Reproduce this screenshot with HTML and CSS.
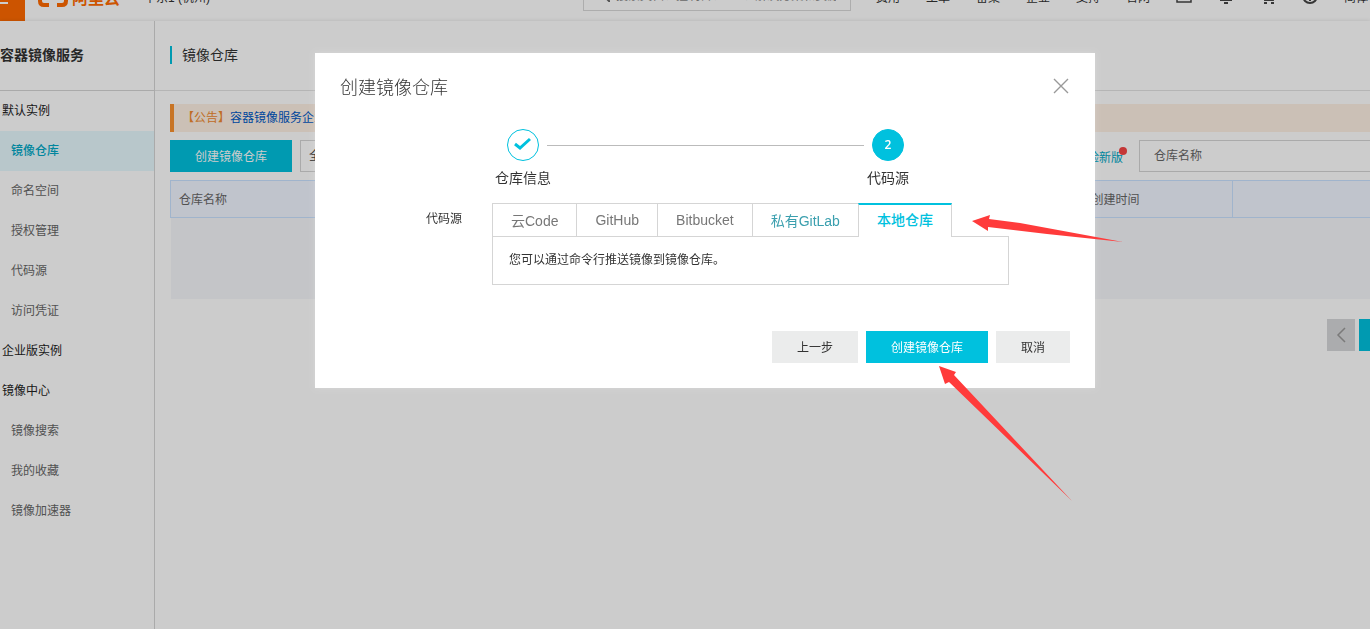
FILE: index.html
```html
<!DOCTYPE html>
<html lang="zh-CN">
<head>
  <meta charset="UTF-8">
  <meta name="viewport" content="width=device-width, initial-scale=1.0">
  <title>容器镜像服务</title>
  <link rel="stylesheet" href="styles.css">
</head>
<body>

  <header class="topbar">
    <div class="topbar-inner">
      <button class="menu-btn" type="button" aria-label="菜单">
        <svg width="24" height="18" viewBox="0 0 24 18"><path d="M0 2h8M0 9h8M0 16h8" stroke="#fff" stroke-width="2"/></svg>
      </button>
      <a class="logo" href="#">
        <svg width="30" height="20" viewBox="0 0 30 20" fill="none" stroke="#ff6a00" stroke-width="4">
          <path d="M11 2H6Q2 2 2 6v8q0 4 4 4h5M19 2h5q4 0 4 4v8q0 4-4 4h-5"/>
        </svg>
        <span>阿里云</span>
      </a>
      <span class="region">华东1 (杭州)</span>
      <div class="search">
        <svg width="12" height="12" viewBox="0 0 12 12" fill="none" stroke="#666" stroke-width="2"><circle cx="5" cy="5" r="4"/><path d="M8 8l4 4"/></svg>
        <input type="text" aria-label="搜索" placeholder="搜索文档、控制台、API、解决方案和资源">
      </div>
      <nav class="topnav">
        <a href="#">费用</a>
        <a href="#">工单</a>
        <a href="#">备案</a>
        <a href="#">企业</a>
        <a href="#">支持</a>
        <a href="#">官网</a>
        <svg width="16" height="14" viewBox="0 0 16 14" fill="none" stroke="#444" stroke-width="1.5"><path d="M1 1h14v12H1zM4 10h8"/></svg>
        <svg width="16" height="16" viewBox="0 0 16 16" fill="none" stroke="#444" stroke-width="2"><path d="M4 12V7a4 4 0 0 1 8 0v5M2 12h12M6 15h4"/></svg>
        <svg width="16" height="16" viewBox="0 0 16 16" fill="none" stroke="#444" stroke-width="2"><path d="M0 1h3l2 11h8l2-8H4M4 15h3M11 15h3"/></svg>
        <svg width="16" height="16" viewBox="0 0 16 16" fill="none" stroke="#444" stroke-width="2"><circle cx="8" cy="8" r="7"/><path d="M5 6a3 3 0 1 1 3 3v4"/></svg>
        <a href="#">简体</a>
      </nav>
    </div>
  </header>

  <div class="layout">
    <aside class="sidebar">
      <h2>容器镜像服务</h2>
      <nav class="menu">
        <a class="group" href="#">默认实例</a>
        <a class="active" href="#">镜像仓库</a>
        <a href="#">命名空间</a>
        <a href="#">授权管理</a>
        <a href="#">代码源</a>
        <a href="#">访问凭证</a>
        <a class="group" href="#">企业版实例</a>
        <a class="group" href="#">镜像中心</a>
        <a href="#">镜像搜索</a>
        <a href="#">我的收藏</a>
        <a href="#">镜像加速器</a>
      </nav>
    </aside>

    <main class="main">
      <div class="page-head">
        <h1>镜像仓库</h1>
      </div>
      <div class="content">
        <p class="notice">【公告】<a href="#">容器镜像服务企业版</a></p>
        <div class="toolbar">
          <button class="btn primary" type="button">创建镜像仓库</button>
          <select class="namespace" aria-label="命名空间">
            <option>全部命名空间</option>
          </select>
          <a class="new-version" href="#">体验新版</a>
          <input class="filter" type="text" aria-label="仓库名称" placeholder="仓库名称">
        </div>
        <table class="repo-table">
          <thead>
            <tr>
              <th>仓库名称</th>
              <th class="col-time">创建时间</th>
              <th class="col-action"></th>
            </tr>
          </thead>
          <tbody>
            <tr><td colspan="3"></td></tr>
          </tbody>
        </table>
        <div class="pager">
          <button class="prev" type="button" aria-label="上一页">
            <svg width="10" height="16" viewBox="0 0 10 16" fill="none" stroke="#999" stroke-width="1.5"><path d="M9 1L2 8l7 7"/></svg>
          </button>
          <button class="current" type="button" aria-label="当前页"></button>
        </div>
      </div>
    </main>
  </div>

  <div class="mask">
    <div class="modal" role="dialog" aria-labelledby="modalTitle">
      <div class="modal-head">
        <h3 id="modalTitle">创建镜像仓库</h3>
        <button class="close" type="button" aria-label="关闭">
          <svg width="16" height="16" viewBox="0 0 16 16" stroke="#999" stroke-width="1.4"><path d="M1 1l14 14M15 1L1 15"/></svg>
        </button>
      </div>

      <div class="steps">
        <div class="step">
          <span class="dot done">
            <svg width="30" height="30" viewBox="0 0 30 30" fill="none" stroke="#00c1de" stroke-width="3"><path d="M7 14l5 4L22 9"/></svg>
          </span>
          <span class="step-name">仓库信息</span>
        </div>
        <div class="step-line"></div>
        <div class="step">
          <span class="dot">2</span>
          <span class="step-name">代码源</span>
        </div>
      </div>

      <div class="field">
        <span class="field-label" id="sourceLabel">代码源</span>
        <div class="source">
          <div class="tabs" role="tablist" aria-labelledby="sourceLabel">
            <button type="button" role="tab">云Code</button>
            <button type="button" role="tab">GitHub</button>
            <button type="button" role="tab">Bitbucket</button>
            <button class="hover" type="button" role="tab">私有GitLab</button>
            <button class="selected" type="button" role="tab" aria-selected="true">本地仓库</button>
          </div>
          <p class="panel">您可以通过命令行推送镜像到镜像仓库。</p>
        </div>
      </div>

      <div class="modal-foot">
        <button class="btn" type="button">上一步</button>
        <button class="btn primary" type="button">创建镜像仓库</button>
        <button class="btn" type="button">取消</button>
      </div>

      <!-- arrows pointing at the selected tab and the submit button -->
      <svg class="arrows" width="820" height="460" viewBox="0 0 820 460" fill="#ff3b3b">
        <path d="M657 168l18-6-1 4 31 4 103 19-76-8-59-7v4z"/>
        <path d="M624 313l17 6-2 3 118 126-123-119-4 2z"/>
      </svg>
    </div>
  </div>

</body>
</html>
```
FILE: styles.css
```css
* {
  box-sizing: border-box;
}

body {
  margin: 0;
  font-family: "Liberation Sans", "Noto Sans CJK SC", sans-serif;
  font-size: 12px;
  color: #333;
  background-color: #fff;
  min-height: 100vh;
  display: flex;
  flex-direction: column;
  overflow: hidden;
}

h1, h2, h3, p {
  margin: 0;
  font-weight: normal;
}

a {
  color: inherit;
  text-decoration: none;
}

button, input, select {
  font: inherit;
  color: inherit;
  border: none;
  border-radius: 0;
  padding: 0;
  background: none;
}

button {
  cursor: pointer;
}

svg {
  display: block;
  flex: none;
}

/* Top bar, scrolled partly out of view */
.topbar {
  height: 21px;
  display: flex;
  align-items: flex-end;
  overflow: hidden;
}

.topbar-inner {
  flex: 1;
  height: 50px;
  display: flex;
  align-items: center;
  white-space: nowrap;
}

.menu-btn {
  width: 25px;
  height: 50px;
  background-color: #ff6a00;
}

.logo {
  display: flex;
  align-items: center;
  gap: 4px;
  padding: 2px 0 0 13px;
  color: #ff6a00;
  font-size: 16px;
  font-weight: bold;
}

.region {
  padding-left: 24px;
}

.search {
  display: flex;
  align-items: center;
  gap: 6px;
  width: 268px;
  height: 30px;
  margin-left: auto;
  padding: 0 14px;
  border: 1px solid #d9d9d9;
}

.search input {
  flex: 1;
  min-width: 0;
}

.search input::placeholder {
  color: #888;
}

.topnav {
  display: flex;
  align-items: center;
  gap: 26px;
  padding: 0 2px 0 25px;
}

.layout {
  flex: 1;
  display: flex;
  box-shadow: 0 0 4px rgba(0, 0, 0, 0.12);
}

/* Sidebar */
.sidebar {
  width: 155px;
  border-right: 1px solid #d5d5d5;
}

.sidebar h2 {
  height: 70px;
  line-height: 68px;
  border-bottom: 1px solid #d5d5d5;
  font-size: 14px;
  font-weight: bold;
}

.menu a {
  display: block;
  height: 40px;
  line-height: 40px;
  padding-left: 11px;
  color: #666;
}

.menu .group {
  padding-left: 2px;
  color: #222;
}

.menu .active {
  background-color: #e6f9fe;
  color: #00a8c6;
  font-weight: 500;
}

/* Main area */
.main {
  flex: 1;
  min-width: 0;
}

.page-head {
  height: 70px;
  display: flex;
  align-items: center;
  padding: 0 0 2px 15px;
  border-bottom: 1px solid #e3e3e3;
}

.page-head h1 {
  border-left: 2px solid #00c1de;
  padding-left: 10px;
  font-size: 14px;
  line-height: 18px;
}

.content {
  padding: 13px 0 0 15px;
}

.notice {
  height: 28px;
  line-height: 28px;
  padding-left: 8px;
  border-left: 4px solid #fb912d;
  background-color: #fef0e4;
  color: #f08a30;
}

.notice a {
  color: #0058c4;
}

.toolbar {
  display: flex;
  align-items: center;
  gap: 8px;
  margin: 8px 0;
}

.btn {
  height: 32px;
  padding: 0 25px 2px;
  background-color: #ebecec;
}

.btn.primary {
  background-color: #00c1de;
  color: #fff;
}

.namespace {
  width: 150px;
  height: 32px;
  padding-left: 4px;
  border: 1px solid #d5d5d5;
}

.new-version {
  position: relative;
  margin-left: auto;
  margin-right: 8px;
  color: #00a8c6;
}

.new-version::after {
  content: "";
  position: absolute;
  top: -1px;
  right: -4px;
  width: 8px;
  height: 8px;
  border-radius: 50%;
  background-color: #f64545;
}

.filter {
  width: 231px;
  height: 32px;
  padding-left: 14px;
  border: 1px solid #d5d5d5;
  border-right: none;
}

.filter::placeholder {
  color: #666;
}

.repo-table {
  width: 100%;
  table-layout: fixed;
  border-collapse: collapse;
}

.repo-table th {
  height: 37px;
  padding: 0 8px 2px;
  border: 1px solid #c8e1ff;
  border-right: none;
  background-color: #f1f5ff;
  color: #666;
  font-weight: normal;
  text-align: left;
}

.repo-table .col-time {
  width: 149px;
}

.repo-table .col-action {
  width: 138px;
}

.repo-table td {
  height: 81px;
  background-color: #f6f7fa;
}

.pager {
  display: flex;
  justify-content: flex-end;
  gap: 4px;
  margin-top: 20px;
}

.pager button {
  height: 32px;
}

.pager .prev {
  width: 28px;
  padding-left: 9px;
  background-color: #d6d8da;
}

.pager .current {
  width: 11px;
  background-color: #00c1de;
}

/* Dialog */
.mask {
  position: fixed;
  inset: 0;
  display: flex;
  justify-content: center;
  align-items: flex-start;
  padding: 53px 0 0 40px;
  background-color: rgba(0, 0, 0, 0.2);
}

.modal {
  position: relative;
  width: 780px;
  padding: 20px 25px 25px;
  background-color: #fff;
  box-shadow: 0 0 6px rgba(255, 255, 255, 0.2);
}

.modal-head {
  display: flex;
  justify-content: space-between;
  align-items: center;
  height: 26px;
}

.modal-head h3 {
  font-size: 18px;
  font-weight: 300;
}

.close {
  padding: 1px;
}

.steps {
  display: flex;
  gap: 8px;
  width: 397px;
  margin: 30px 0 0 167px;
}

.step {
  display: flex;
  flex-direction: column;
  align-items: center;
  gap: 6px;
  width: 32px;
  font-size: 14px;
  line-height: 22px;
}

.step-name {
  white-space: nowrap;
}

.step-line {
  flex: 1;
  height: 1px;
  margin-top: 16px;
  background-color: #bbb;
}

.dot {
  display: flex;
  justify-content: center;
  align-items: center;
  width: 32px;
  height: 32px;
  border: 1px solid #00c1de;
  border-radius: 50%;
  background-color: #00c1de;
  color: #fff;
  font-family: "Open Sans", sans-serif;
  font-size: 12px;
  font-weight: 600;
}

.dot.done {
  background-color: #fff;
}

.field {
  display: flex;
  gap: 30px;
  margin-top: 14px;
}

.field-label {
  width: 122px;
  line-height: 32px;
  text-align: right;
}

.source {
  width: 517px;
}

.tabs {
  display: flex;
}

.tabs button {
  height: 34px;
  padding: 0 18px 2px;
  border-top: 1px solid #d5d5d5;
  border-left: 1px solid #d5d5d5;
  color: #777;
  font-size: 14px;
}

.tabs .hover {
  color: #3a9fae;
}

/* covers the panel border below it */
.tabs .selected {
  position: relative;
  padding-bottom: 4px;
  border-top: 2px solid #00c1de;
  border-right: 1px solid #d5d5d5;
  background-color: #fff;
  color: #00c1de;
  font-weight: 500;
}

.panel {
  margin-top: -1px;
  padding: 0 16px;
  border: 1px solid #d5d5d5;
  line-height: 47px;
}

.modal-foot {
  display: flex;
  justify-content: flex-end;
  gap: 8px;
  margin-top: 46px;
}

.arrows {
  position: absolute;
  top: 0;
  left: 0;
  pointer-events: none;
}
```
